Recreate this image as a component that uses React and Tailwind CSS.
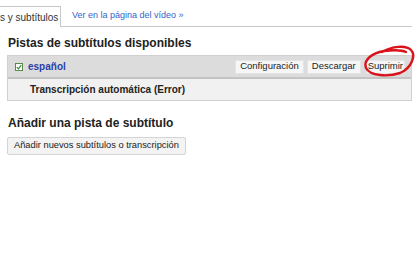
export default function App() {
  return (
    <div className="relative w-[420px] h-[280px] bg-white overflow-hidden" style={{ fontFamily: '"Liberation Sans", Arial, sans-serif' }}>
      {/* tabs */}
      <div className="flex items-end h-[27px] pt-[6px] w-[412px]">
        <div className="h-[21px] w-[61px] border-t border-r border-[#c8c8c8] bg-white flex items-center text-[10px] text-[#333] whitespace-nowrap">
          s y subtítulos
        </div>
        <div className="flex-1 h-[21px] border-b border-[#c8c8c8] flex items-center pl-[11px] text-[9px] text-[#3366cc] whitespace-nowrap">
          Ver en la página del vídeo »
        </div>
      </div>

      <div className="pl-[7px] w-[412px]">
        <h2 className="mt-[8px] pl-[1px] text-[12px] font-bold text-[#222] leading-[16px]">Pistas de subtítulos disponibles</h2>

        <div className="mt-[4px] border border-[#d0d0d0]">
          <div className="h-[23px] bg-[#dcdcdc] border-b-2 border-[#c4c4c4] flex items-center pl-[7px] pr-[6px]">
            <div className="w-[8px] h-[8px] border border-[#5a8a4a] bg-white flex items-center justify-center">
              <svg width="6" height="6" viewBox="0 0 6 6"><path d="M0.8 3.2 L2.4 4.8 L5.2 1.2" fill="none" stroke="#2f8a2f" strokeWidth="1.2" /></svg>
            </div>
            <span className="ml-[5px] text-[10px] font-bold text-[#2a3fa8]">español</span>
            <div className="ml-auto flex">
              <span className="h-[14px] px-[4px] bg-[#f6f6f6] border border-[#e4e4e4] text-[9.5px] text-[#222] flex items-center">Configuración</span>
              <span className="ml-[3px] h-[14px] px-[4px] bg-[#f6f6f6] border border-[#e4e4e4] text-[9.5px] text-[#222] flex items-center">Descargar</span>
              <span className="ml-[5px] h-[14px] px-[1px] bg-[#f6f6f6] border border-[#e4e4e4] text-[9.5px] text-[#222] flex items-center">Suprimir</span>
            </div>
          </div>
          <div className="h-[21px] bg-[#f1f1f1] flex items-center pl-[22px] text-[10px] font-bold text-[#222]">
            Transcripción automática (Error)
          </div>
        </div>

        <h2 className="mt-[14px] pl-[1px] text-[12px] font-bold text-[#222] leading-[16px]">Añadir una pista de subtítulo</h2>
        <div className="mt-[5px] inline-flex h-[18px] items-center px-[6px] bg-[#f3f3f3] border border-[#d4d4d4] rounded-[2px] text-[9.3px] text-[#222]">
          Añadir nuevos subtítulos o transcripción
        </div>
      </div>

      {/* red annotation ellipse */}
      <svg className="absolute left-[360px] top-[40px]" width="60" height="42" viewBox="0 0 60 42">
        <path d="M22 12 C32 6 46 5 51 10 C56 15 52 28 40 33 C28 37 10 36 6 28 C3 20 12 13 24 11 C32 10 42 10 46 12" fill="none" stroke="#d8131b" strokeWidth="2.4" strokeLinecap="round" />
      </svg>
    </div>
  );
}
